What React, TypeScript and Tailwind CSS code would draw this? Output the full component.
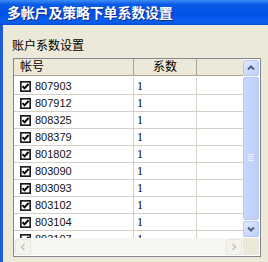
import React from 'react';

const accounts = ['807903', '807912', '808325', '808379', '801802', '803090', '803093', '803102', '803104', '803107'];

function CheckBox() {
  return (
    <svg width="11" height="11" viewBox="0 0 11 11" className="shrink-0">
      <rect x="0.75" y="0.75" width="9.5" height="9.5" fill="#fff" stroke="#1c1c1c" strokeWidth="1.8" />
      <path d="M2.5 5.2 L4.5 7.4 L8.6 3" fill="none" stroke="#000" strokeWidth="1.9" />
    </svg>
  );
}

function ScrollBtn({ dir }: { dir: 'up' | 'down' }) {
  return (
    <div className="h-[16px] w-[16px] rounded-[2px] border border-[#b7c9f3] bg-[linear-gradient(135deg,#dfe8fe,#bccffa)] flex items-center justify-center">
      <svg width="8" height="6" viewBox="0 0 8 6">
        <path d={dir === 'up' ? 'M1 4.5 L4 1.5 L7 4.5' : 'M1 1.5 L4 4.5 L7 1.5'} fill="none" stroke="#4d6185" strokeWidth="2" />
      </svg>
    </div>
  );
}

function HBtn({ dir }: { dir: 'left' | 'right' }) {
  return (
    <div className="h-[16px] w-[16px] rounded-[2px] border border-[#e8e7df] bg-[#f4f3ee] flex items-center justify-center">
      <svg width="6" height="8" viewBox="0 0 6 8">
        <path d={dir === 'left' ? 'M4.5 1 L1.5 4 L4.5 7' : 'M1.5 1 L4.5 4 L1.5 7'} fill="none" stroke="#c9c7ba" strokeWidth="1.6" />
      </svg>
    </div>
  );
}

export default function App() {
  return (
    <div className="w-[268px] h-[262px] overflow-hidden bg-[#ece9d8] flex flex-col font-['Liberation_Sans','Noto_Sans_CJK_SC',sans-serif]">
      {/* title bar */}
      <div className="h-[25px] shrink-0 bg-[linear-gradient(to_bottom,#3d8cf7_0%,#0a5ae6_18%,#0050e6_55%,#0a5ff0_85%,#0551dc_100%)] flex items-center pl-[7px]">
        <span className="text-white text-[14px] font-bold leading-none tracking-[-0.2px] [text-shadow:1px_1px_0_#0a2a8a]">多帐户及策略下单系数设置</span>
      </div>

      <div className="flex-1 border-l-[3px] border-[#1d5ad6] pl-[9px] pt-[14px]">
        <div className="text-[12px] leading-[14px] text-black">账户系数设置</div>

        {/* list box */}
        <div className="mt-[5px] ml-[1px] w-[248px] h-[199px] border border-[#828790] bg-white grid grid-cols-[229px_16px] grid-rows-[179px_17px]">
          <div className="overflow-hidden">
            {/* header */}
            <div className="h-[17px] flex bg-[#ece9d8] border-b border-[#a7a595] text-[12px] leading-[16px] text-black">
              <div className="w-[120px] border-r border-[#aca899] pl-[6px]">帐号</div>
              <div className="w-[63px] border-r border-[#aca899] text-center">系数</div>
              <div className="flex-1" />
            </div>
            <div className="pt-[2px]">
              {accounts.map((a) => (
                <div key={a} className="h-[17px] flex border-b border-[#d4d0c8] text-[11px] leading-[16px] text-black">
                  <div className="w-[120px] border-r border-[#d4d0c8] pl-[6px] flex items-center gap-[4px]">
                    <CheckBox />
                    <span className="text-[#111]">{a}</span>
                  </div>
                  <div className="w-[63px] border-r border-[#d4d0c8] pl-[3px] font-['Liberation_Serif',serif] text-[12px] text-[#000]">1</div>
                  <div className="flex-1" />
                </div>
              ))}
            </div>
          </div>

          {/* vertical scrollbar */}
          <div className="flex flex-col bg-[#fcfcfe] py-[1px]">
            <ScrollBtn dir="up" />
            <div className="flex-1 my-[1px] rounded-[2px] border border-[#b7c9f3] bg-[linear-gradient(to_right,#c8d7fc,#bccffa)] flex items-end justify-center pb-[58px]">
              <div className="flex flex-col gap-[1px]">
                <div className="w-[6px] h-[1px] bg-[#eef3fe]" />
                <div className="w-[6px] h-[1px] bg-[#eef3fe]" />
                <div className="w-[6px] h-[1px] bg-[#eef3fe]" />
                <div className="w-[6px] h-[1px] bg-[#eef3fe]" />
              </div>
            </div>
            <ScrollBtn dir="down" />
          </div>

          {/* horizontal scrollbar */}
          <div className="flex items-center justify-between bg-[#f7f6f0] px-[1px]">
            <HBtn dir="left" />
            <HBtn dir="right" />
          </div>
          <div className="bg-[#ece9d8]" />
        </div>
      </div>
    </div>
  );
}
